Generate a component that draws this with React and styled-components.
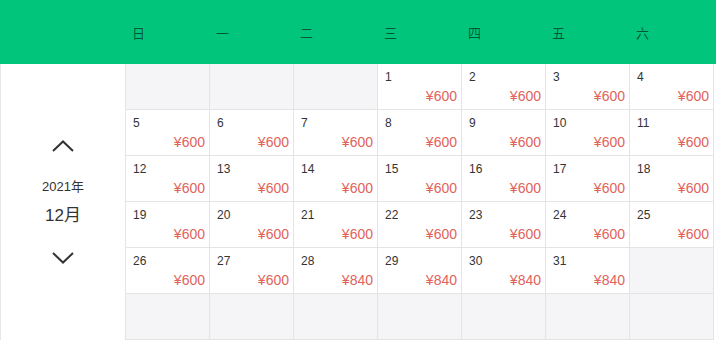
import React from "react";
import styled, { createGlobalStyle } from "styled-components";

const GlobalStyle = createGlobalStyle`
  body {
    margin: 0;
    background: #fff;
    font-family: "Liberation Sans", Arial, "Noto Sans CJK SC", sans-serif;
  }
`;

const Wrapper = styled.div`
  width: 716px;
  height: 341px;
  overflow: hidden;
  background: #fff;
`;

const Header = styled.div`
  height: 64px;
  background: #00c57b;
  display: grid;
  grid-template-columns: 125px repeat(7, 84px);
  align-items: center;
`;

const WeekLabel = styled.div`
  padding-left: 7px;
  font-size: 13px;
  color: rgba(0, 0, 0, 0.58);
  font-family: "Noto Sans CJK SC", sans-serif;
`;

const Body = styled.div`
  display: flex;
`;

const Side = styled.div`
  width: 124px;
  height: 276px;
  border-left: 1px solid #e6e6e6;
  display: flex;
  flex-direction: column;
  align-items: center;
  justify-content: center;
  color: #333;
`;

const Arrow = styled.button`
  border: none;
  background: none;
  padding: 0;
  margin: ${props => props.margin};
  display: flex;
  cursor: pointer;
`;

const Year = styled.div`
  font-size: 13px;
  line-height: 16px;
`;

const Month = styled.div`
  font-size: 17px;
  line-height: 22px;
  margin-top: 10px;
`;

const Grid = styled.div`
  display: grid;
  grid-template-columns: repeat(7, 83px);
  grid-auto-rows: 45px;
  gap: 1px;
  background: #e4e4e4;
  border-left: 1px solid #e4e4e4;
  border-right: 1px solid #e4e4e4;
  border-bottom: 1px solid #e4e4e4;
`;

const Cell = styled.div`
  background: ${props => (props.empty ? "#f5f4f6" : "#fff")};
  display: flex;
  flex-direction: column;
  padding: 6px 4px 0 7px;
  box-sizing: border-box;
`;

const Day = styled.div`
  font-size: 12px;
  line-height: 14px;
  color: #333;
`;

const Price = styled.div`
  align-self: flex-end;
  font-size: 14px;
  line-height: 18px;
  margin-top: 3px;
  color: #e2625a;
`;

const weekDays = ["日", "一", "二", "三", "四", "五", "六"];

const Chevron = ({ up }) => (
  <svg width="22" height="12" viewBox="0 0 22 12">
    <path
      d={up ? "M1 11 L11 1.5 L21 11" : "M1 1 L11 10.5 L21 1"}
      fill="none"
      stroke="#333"
      strokeWidth="2"
    />
  </svg>
);

function buildCells() {
  const cells = [];
  for (let i = 0; i < 3; i++) cells.push(null);
  for (let d = 1; d <= 31; d++) cells.push({ day: d, price: d >= 28 ? 840 : 600 });
  while (cells.length < 42) cells.push(null);
  return cells;
}

export default function App() {
  const cells = buildCells();
  return (
    <Wrapper>
      <GlobalStyle />
      <Header>
        <div />
        {weekDays.map(w => (
          <WeekLabel key={w}>{w}</WeekLabel>
        ))}
      </Header>
      <Body>
        <Side>
          <Arrow margin="0 0 27px">
            <Chevron up />
          </Arrow>
          <Year>2021年</Year>
          <Month>12月</Month>
          <Arrow margin="25px 0 0">
            <Chevron />
          </Arrow>
        </Side>
        <Grid>
          {cells.map((c, idx) =>
            c ? (
              <Cell key={idx}>
                <Day>{c.day}</Day>
                <Price>¥{c.price}</Price>
              </Cell>
            ) : (
              <Cell key={idx} empty />
            )
          )}
        </Grid>
      </Body>
    </Wrapper>
  );
}
